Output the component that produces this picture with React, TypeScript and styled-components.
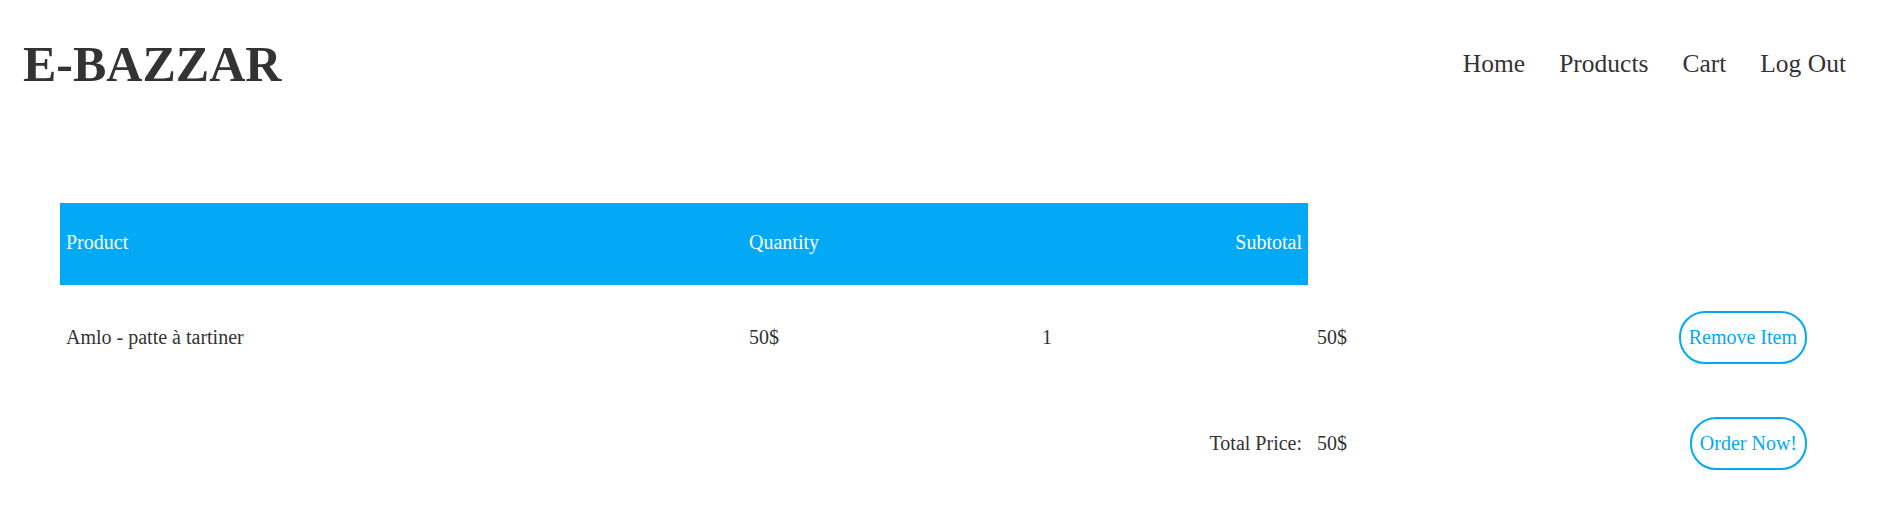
import React from "react";
import styled, { createGlobalStyle } from "styled-components";

const GlobalStyle = createGlobalStyle`
  body {
    margin: 0;
    background: #ffffff;
    color: #333333;
    font-family: "Liberation Serif", "Times New Roman", serif;
  }
`;

const Nav = styled.nav`
  height: 127px;
  padding: 0 42px 0 23px;
  display: flex;
  align-items: center;
  justify-content: space-between;
`;
const Logo = styled.h1`
  margin: 0;
  font-size: 50px;
  font-weight: 700;
  color: #333;
`;
const Links = styled.ul`
  margin: 0;
  padding: 0;
  list-style: none;
  display: flex;
  gap: 34px;
  li {
    font-size: 25.5px;
    color: #333;
    cursor: pointer;
  }
`;
const CartTable = styled.table`
  margin: 76px 75px 0 60px;
  width: calc(100% - 135px);
  table-layout: fixed;
  border-collapse: collapse;
  font-size: 20px;
`;
interface CellProps {
  $align?: "left" | "right";
  $padLeft?: number;
}
const HeadCell = styled.th<CellProps>`
  height: 78px;
  padding: 0 6px 4px;
  background-color: #03a9f4;
  color: #ffffff;
  font-weight: 400;
  text-align: ${(props) => props.$align || "left"};
`;
const Cell = styled.td<CellProps>`
  height: 104px;
  padding: 0 6px 2px ${(props) => props.$padLeft ?? 6}px;
  color: #333;
  vertical-align: middle;
  text-align: ${(props) => props.$align || "left"};
`;
const OutlineBtn = styled.button`
  font-family: inherit;
  font-size: 20px;
  line-height: 23px;
  padding: 13px 8px;
  color: #03a9f4;
  background: #ffffff;
  border: 2px solid #03a9f4;
  border-radius: 26px;
  cursor: pointer;
  &:hover {
    background: #e1f5fe;
  }
`;

const items = [{ id: 1, name: "Amlo - patte à tartiner", price: 50, qty: 1 }];

export default function App() {
  const total = items.reduce((sum, item) => sum + item.price * item.qty, 0);
  return (
    <div>
      <GlobalStyle />
      <Nav>
        <Logo>E-BAZZAR</Logo>
        <Links>
          <li>Home</li>
          <li>Products</li>
          <li>Cart</li>
          <li>Log Out</li>
        </Links>
      </Nav>
      <CartTable>
        <colgroup>
          <col style={{ width: 683 }} />
          <col style={{ width: 293 }} />
          <col style={{ width: 272 }} />
          <col style={{ width: 250 }} />
          <col />
        </colgroup>
        <thead>
          <tr>
            <HeadCell>Product</HeadCell>
            <HeadCell>Quantity</HeadCell>
            <HeadCell $align="right">Subtotal</HeadCell>
          </tr>
        </thead>
        <tbody>
          {items.map((item) => (
            <tr key={item.id}>
              <Cell>{item.name}</Cell>
              <Cell>{item.price}$</Cell>
              <Cell>{item.qty}</Cell>
              <Cell $padLeft={9}>{item.price * item.qty}$</Cell>
              <Cell $align="right">
                <OutlineBtn>Remove Item</OutlineBtn>
              </Cell>
            </tr>
          ))}
          <tr>
            <Cell />
            <Cell />
            <Cell $align="right">Total Price:</Cell>
            <Cell $padLeft={9}>{total}$</Cell>
            <Cell $align="right">
              <OutlineBtn>Order Now!</OutlineBtn>
            </Cell>
          </tr>
        </tbody>
      </CartTable>
    </div>
  );
}
